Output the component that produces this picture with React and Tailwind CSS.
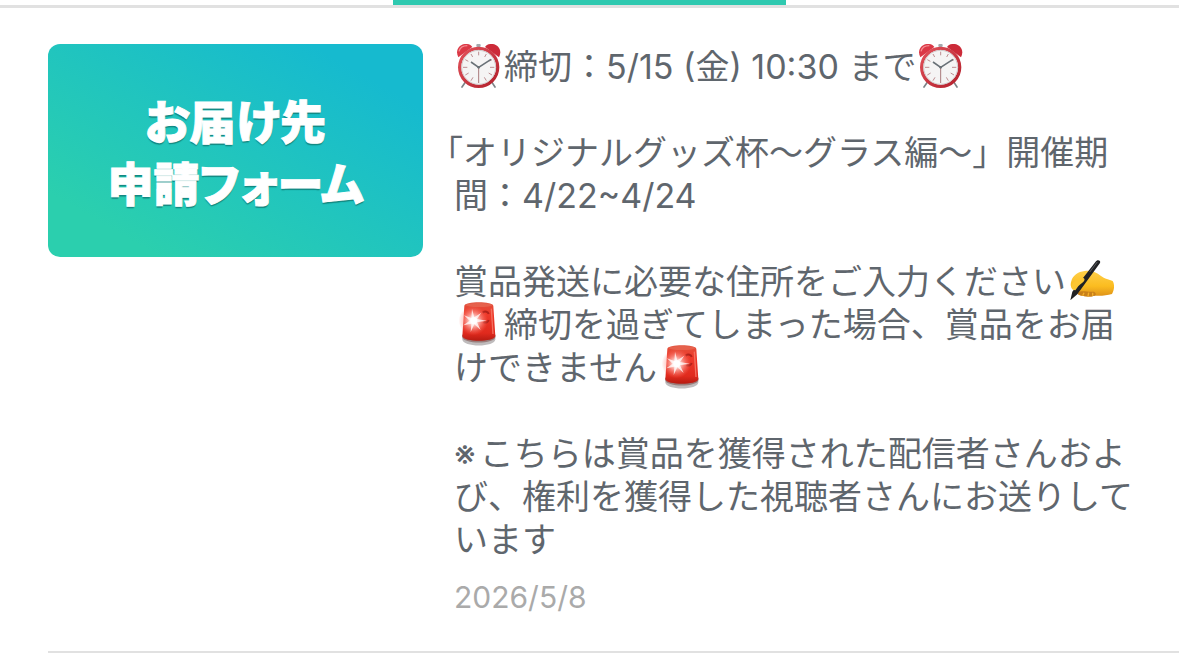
import React from "react";

function AlarmClock() {
  return (
    <svg
      role="img"
      aria-label="目覚まし時計"
      viewBox="0 0 150 132"
      className="inline-block h-11 w-[50px] align-top -mt-px"
    >
      <defs>
        <linearGradient id="ring" x1="0" y1="0" x2="1" y2="1">
          <stop offset="0" stopColor="#e2525b" />
          <stop offset="1" stopColor="#b3202c" />
        </linearGradient>
      </defs>
      <path d="M36 112 L24 129 M112 112 L123 129" stroke="#7d8488" strokeWidth="5" strokeLinecap="round" />
      <rect x="67" y="0" width="13" height="9" rx="3" fill="#a5a9ae" />
      <path d="M13 40 C3 20 14 2 32 0 C44 -1 52 3 55 9 Z" fill="#db3846" />
      <path d="M135 40 C145 20 134 2 116 0 C104 -1 96 3 93 9 Z" fill="#cc2b39" />
      <path d="M15 22 C18 10 28 5 40 5" stroke="#f58d92" strokeWidth="4" fill="none" />
      <circle cx="74" cy="70" r="57" fill="#f5f4f4" stroke="url(#ring)" strokeWidth="10" />
      <circle cx="74" cy="70" r="51" fill="none" stroke="#d2cccd" strokeWidth="3" />
      <g stroke="#bd8f92" strokeWidth="3">
        <path d="M74 23 V34 M121 70 H108 M27 70 H40" />
        <path d="M97 30 L92 39 M114 47 L106 51 M114 93 L104 87 M97 110 L91 100 M51 110 L57 100 M34 93 L44 87 M34 47 L43 52 M51 30 L56 39" />
      </g>
      <path d="M74 70 V117" stroke="#a9797b" strokeWidth="3" />
      <path d="M51 54 L74 70 L111 46" stroke="#697177" strokeWidth="5" fill="none" strokeLinejoin="round" />
      <circle cx="74" cy="70" r="4" fill="#697177" />
    </svg>
  );
}

function Siren() {
  return (
    <svg
      role="img"
      aria-label="パトランプ"
      viewBox="0 0 150 132"
      className="inline-block h-11 w-[50px] align-top -mt-px"
    >
      <defs>
        <linearGradient id="lamp" x1="0" y1="0" x2="0" y2="1">
          <stop offset="0" stopColor="#e0523d" />
          <stop offset="0.3" stopColor="#ee3a2b" />
          <stop offset="0.8" stopColor="#e02a1d" />
          <stop offset="1" stopColor="#b51b12" />
        </linearGradient>
        <radialGradient id="glow">
          <stop offset="0" stopColor="#fff" />
          <stop offset="0.3" stopColor="#ffd5d0" stopOpacity="0.9" />
          <stop offset="1" stopColor="#ff6a5c" stopOpacity="0" />
        </radialGradient>
      </defs>
      <path d="M25 98 V112 C25 137 124 137 124 112 V98 Z" fill="#bfbcbd" />
      <path d="M25 98 V105 C25 127 124 127 124 105 V98 Z" fill="#9a7d7b" />
      <path d="M31 12 C31 -3 118 -3 118 12 L124 103 C120 121 29 121 25 103 Z" fill="url(#lamp)" />
      <ellipse cx="75" cy="9" rx="40" ry="6" fill="#e8705a" opacity="0.6" />
      <path d="M86 32 C94 26 102 29 104 36 M88 60 C96 64 102 60 104 54" stroke="#b3221a" strokeWidth="6" fill="none" />
      <path d="M112 20 L117 96" stroke="#f4705f" strokeWidth="4" />
      <circle cx="58" cy="56" r="44" fill="url(#glow)" />
      <path
        d="M54 20 L61 46 L82 32 L69 51 L98 56 L69 61 L80 84 L61 67 L50 90 L52 65 L28 70 L47 56 L30 40 L52 48 Z"
        fill="#fff"
        opacity="0.75"
      />
      <circle cx="59" cy="56" r="10" fill="#fff" />
    </svg>
  );
}

function WritingHand() {
  return (
    <svg
      role="img"
      aria-label="書く手"
      viewBox="0 0 150 132"
      className="inline-block h-11 w-[50px] align-top -mt-px"
    >
      <defs>
        <linearGradient id="skin" x1="0" y1="0" x2="0" y2="1">
          <stop offset="0" stopColor="#ffd04a" />
          <stop offset="0.6" stopColor="#fbbc20" />
          <stop offset="1" stopColor="#dd9018" />
        </linearGradient>
      </defs>
      <path
        d="M16 66 C20 50 36 38 56 36 C76 33 92 40 104 50 C116 60 130 61 140 66 C146 76 146 92 138 105 C122 110 104 111 86 110 C66 115 46 112 36 106 C30 98 32 92 26 90 C14 90 12 78 16 66 Z"
        fill="url(#skin)"
      />
      <path
        d="M36 102 C46 92 62 100 84 98 C90 102 92 107 86 110 C66 115 46 112 36 106 Z"
        fill="#c9801a"
      />
      <path d="M50 110 L54 101 M66 112 L68 101 M80 110 L80 101" stroke="#f3b02a" strokeWidth="4" />
      <path d="M90 7 C94 0 106 4 102 12 L34 106 L13 124 L19 98 Z" fill="#202124" />
      <path d="M93 10 L72 38" stroke="#5b5d61" strokeWidth="3" strokeLinecap="round" />
      <path
        d="M18 76 C26 64 36 57 50 56 C58 57 57 66 49 71 C39 77 33 86 28 94 C17 94 14 85 18 76 Z"
        fill="#fdc632"
      />
    </svg>
  );
}

function Tabs() {
  return (
    <div className="grid grid-cols-3 border-b-[3px] border-[#e1e1e1]">
      <div className="col-start-2 h-[5px] bg-[#2fc9b0]" />
    </div>
  );
}

function Thumbnail() {
  return (
    <div className="flex h-[213px] w-[375px] shrink-0 items-center justify-center rounded-xl bg-[linear-gradient(30deg,#2bcfae_15%,#16bacf_85%)]">
      <p className="pb-0.5 text-center font-['Noto_Sans_CJK_JP',sans-serif] text-[46px] leading-[62px] font-black text-white [font-feature-settings:'palt'] [-webkit-text-stroke:1px_white] [text-shadow:0_2px_1px_#12867f]">
        お届け先
        <br />
        申請フォーム
      </p>
    </div>
  );
}

function NoticeItem() {
  return (
    <article className="ml-12 flex gap-[31px] border-b-2 border-[#e1e1e1] pt-9 pb-[34px]">
      <Thumbnail />
      <div className="min-w-0 flex-1 pt-px font-['Inter','Noto_Sans_CJK_JP',sans-serif] whitespace-nowrap">
        <div className="flex flex-col gap-[43px] text-[34px] leading-[43px] text-[#5f666d]">
          <p>
            <AlarmClock />
            締切：5/15 (金) 10:30 まで
            <AlarmClock />
          </p>
          <p className="-indent-2 [text-spacing-trim:trim-start]">
            「オリジナルグッズ杯〜グラス編〜」開催期
            <br />
            間：4/22~4/24
          </p>
          <p>
            賞品発送に必要な住所をご入力ください
            <WritingHand />
            <br />
            <Siren />
            締切を過ぎてしまった場合、賞品をお届
            <br />
            けできません
            <Siren />
          </p>
          <p>
            <span className="mr-1">※</span>
            こちらは賞品を獲得された配信者さんおよ
            <br />
            び、権利を獲得した視聴者さんにお送りして
            <br />
            います
          </p>
        </div>
        <time dateTime="2026-05-08" className="mt-4 block text-[30px] leading-10 text-[#aaaaaa]">
          2026/5/8
        </time>
      </div>
    </article>
  );
}

export default function App() {
  return (
    <main lang="ja" className="bg-white">
      <Tabs />
      <NoticeItem />
    </main>
  );
}
